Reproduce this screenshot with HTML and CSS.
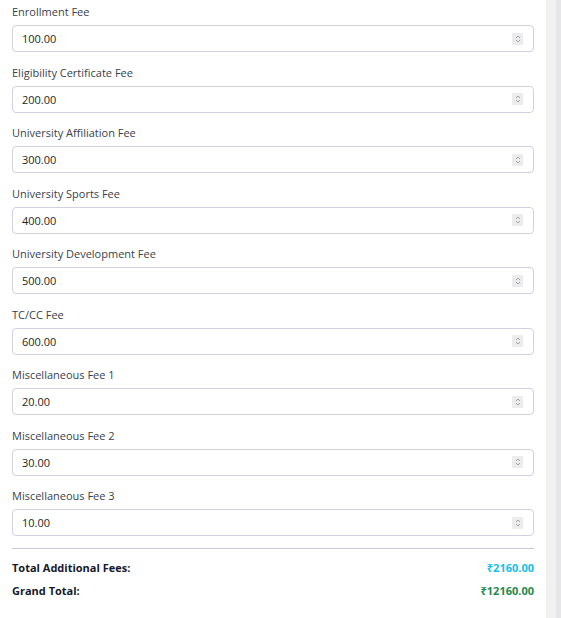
FILE: index.html
```html
<!DOCTYPE html>
<html>
<head>
<meta charset="utf-8">
<link rel="stylesheet" href="styles.css">
</head>
<body>
<div class="page">
  <main class="content">
    <div class="field"><label class="label">Enrollment Fee</label><div class="input"><span>100.00</span><span class="spin"><svg viewBox="0 0 10 12" width="10" height="12"><path d="M3 5 L5 3 L7 5 M3 7 L5 9 L7 7" fill="none" stroke="#9a9aa0" stroke-width="0.9"/></svg></span></div></div>
    <div class="field"><label class="label">Eligibility Certificate Fee</label><div class="input"><span>200.00</span><span class="spin"><svg viewBox="0 0 10 12" width="10" height="12"><path d="M3 5 L5 3 L7 5 M3 7 L5 9 L7 7" fill="none" stroke="#9a9aa0" stroke-width="0.9"/></svg></span></div></div>
    <div class="field"><label class="label">University Affiliation Fee</label><div class="input"><span>300.00</span><span class="spin"><svg viewBox="0 0 10 12" width="10" height="12"><path d="M3 5 L5 3 L7 5 M3 7 L5 9 L7 7" fill="none" stroke="#9a9aa0" stroke-width="0.9"/></svg></span></div></div>
    <div class="field"><label class="label">University Sports Fee</label><div class="input"><span>400.00</span><span class="spin"><svg viewBox="0 0 10 12" width="10" height="12"><path d="M3 5 L5 3 L7 5 M3 7 L5 9 L7 7" fill="none" stroke="#9a9aa0" stroke-width="0.9"/></svg></span></div></div>
    <div class="field"><label class="label">University Development Fee</label><div class="input"><span>500.00</span><span class="spin"><svg viewBox="0 0 10 12" width="10" height="12"><path d="M3 5 L5 3 L7 5 M3 7 L5 9 L7 7" fill="none" stroke="#9a9aa0" stroke-width="0.9"/></svg></span></div></div>
    <div class="field"><label class="label">TC/CC Fee</label><div class="input"><span>600.00</span><span class="spin"><svg viewBox="0 0 10 12" width="10" height="12"><path d="M3 5 L5 3 L7 5 M3 7 L5 9 L7 7" fill="none" stroke="#9a9aa0" stroke-width="0.9"/></svg></span></div></div>
    <div class="field"><label class="label">Miscellaneous Fee 1</label><div class="input"><span>20.00</span><span class="spin"><svg viewBox="0 0 10 12" width="10" height="12"><path d="M3 5 L5 3 L7 5 M3 7 L5 9 L7 7" fill="none" stroke="#9a9aa0" stroke-width="0.9"/></svg></span></div></div>
    <div class="field"><label class="label">Miscellaneous Fee 2</label><div class="input"><span>30.00</span><span class="spin"><svg viewBox="0 0 10 12" width="10" height="12"><path d="M3 5 L5 3 L7 5 M3 7 L5 9 L7 7" fill="none" stroke="#9a9aa0" stroke-width="0.9"/></svg></span></div></div>
    <div class="field"><label class="label">Miscellaneous Fee 3</label><div class="input"><span>10.00</span><span class="spin"><svg viewBox="0 0 10 12" width="10" height="12"><path d="M3 5 L5 3 L7 5 M3 7 L5 9 L7 7" fill="none" stroke="#9a9aa0" stroke-width="0.9"/></svg></span></div></div>
    <hr class="divider">
    <div class="row"><span class="row-label">Total Additional Fees:</span><span class="val-cyan">₹2160.00</span></div>
    <div class="row"><span class="row-label">Grand Total:</span><span class="val-green">₹12160.00</span></div>
  </main>
  <div class="scrollbar"><div class="track"></div></div>
</div>
</body>
</html>
```
FILE: styles.css
```css
html, body { margin: 0; padding: 0; background: #fff; }
body { font-family: "Open Sans", "Noto Sans", sans-serif; color: #344054; }
.page { display: flex; width: 561px; height: 618px; overflow: hidden; }
.content { flex: 0 0 522px; width: 522px; padding: 4px 12px 0 12px; }
.field { display: flex; flex-direction: column; margin-bottom: 12.5px; }
.label { font-size: 11px; line-height: 16px; height: 16px; color: #3a3f4b; margin-bottom: 5px; }
.input {
  box-sizing: border-box; height: 27px; border: 1px solid #d2d0e4; border-radius: 4px;
  display: flex; align-items: center; justify-content: space-between;
  padding: 0 10px 0 9px; font-size: 11px; color: #1d1f24;
}
.spin { width: 11px; height: 12px; background: #ececee; display: flex; align-items: center; justify-content: center; border-radius: 1px; }
.spin svg { display: block; }
.divider { border: 0; border-top: 1px solid #c9c9d1; margin: -0.5px 0 0 0; height: 0; }
.row { display: flex; justify-content: space-between; font-size: 11px; font-weight: 700; line-height: 16px; }
.divider + .row { margin-top: 11px; }
.row + .row { margin-top: 7px; }
.row-label { color: #15192a; }
.val-cyan { color: #17c1e8; }
.val-green { color: #1f8a4c; }
.scrollbar { flex: 0 0 15px; width: 15px; height: 618px; background: #f1f1f1; display: flex; justify-content: flex-end; }
.track { width: 5px; background: #e6e6e9; }
```
